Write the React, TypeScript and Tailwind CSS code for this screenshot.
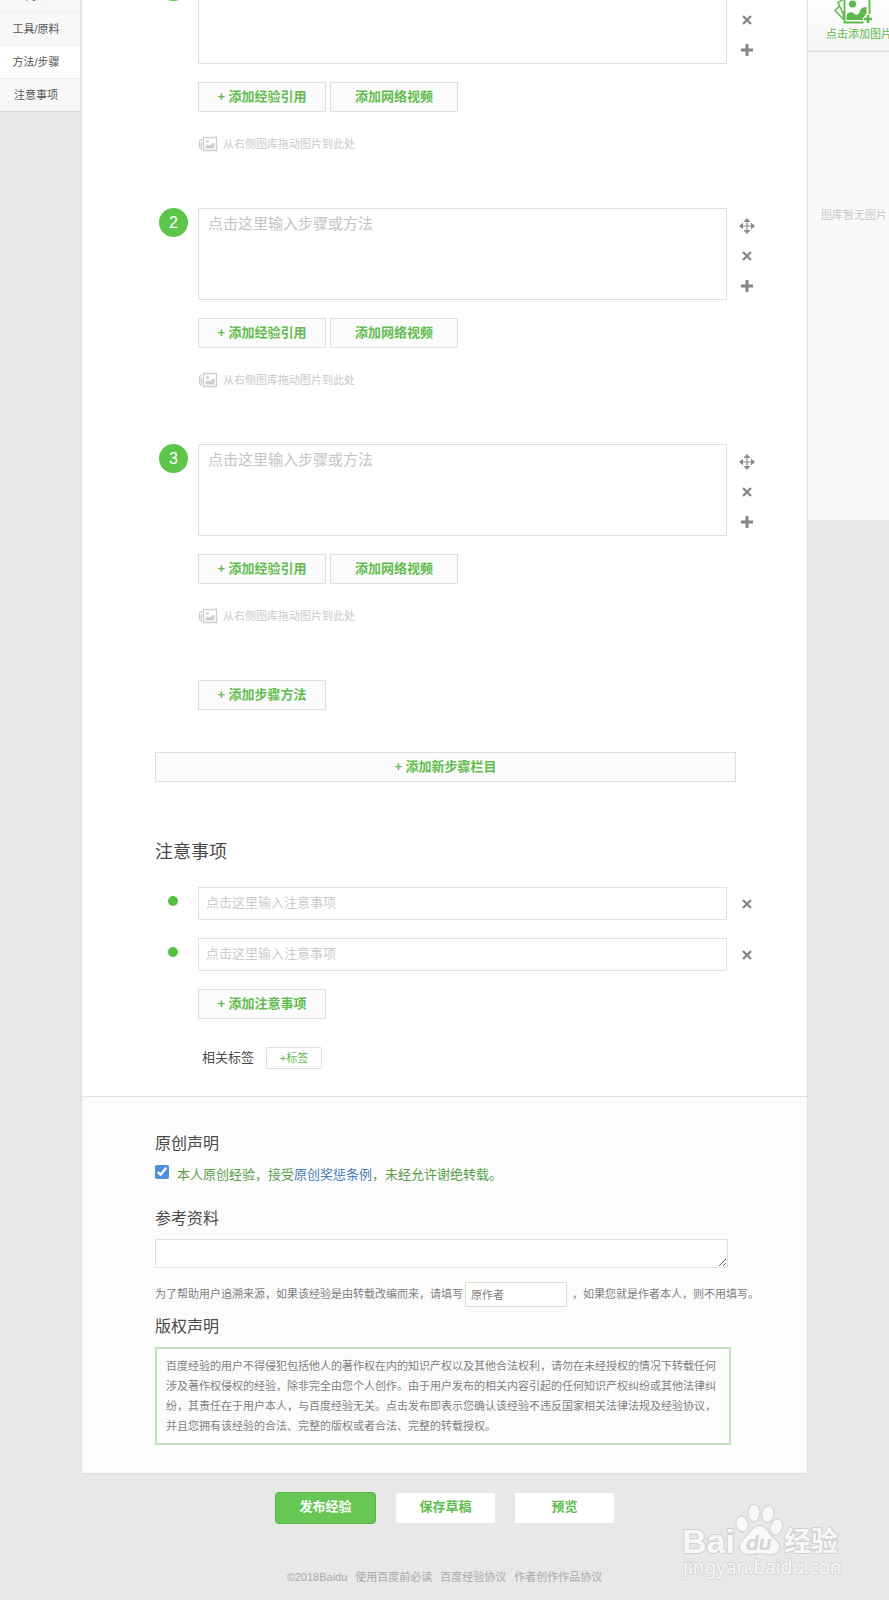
import type { ReactNode } from 'react'

const navItems = ['简介', '工具/原料', '方法/步骤', '注意事项']
const steps = [1, 2, 3]
const notes = [1, 2]

const outlineButton =
  'h-[30px] border border-[#dedede] bg-[#fbfbfb] text-[13px] font-bold text-[#62bd4e]'

const MoveIcon = () => (
  <svg viewBox="0 0 18 18" className="size-[18px]" fill="#8a8a8a">
    <path d="M9 1l3.600 4H5.400zM9 17l3.600-4H5.400zM1 9l4-3.600v7.200zM17 9l-4-3.600v7.200z" />
    <path d="M8.400 4h1.200v4.400H14v1.200H9.600V14H8.400V9.600H4V8.400h4.400z" />
  </svg>
)

const CloseIcon = () => (
  <svg viewBox="0 0 18 18" className="size-[18px]" stroke="#858585" strokeWidth="2.300">
    <path d="M5 5l8 8M13 5l-8 8" />
  </svg>
)

const PlusIcon = () => (
  <svg viewBox="0 0 18 18" className="size-[18px]" stroke="#858585" strokeWidth="3">
    <path d="M9 3v12M3 9h12" />
  </svg>
)

const GalleryIcon = () => (
  <svg viewBox="0 0 20 16" className="h-4 w-5 shrink-0" fill="none" stroke="#cfcfcf">
    <path d="M5.500 1.500h13v13h-13zM3.500 3L1.500 5v6l2 2.500M3.500 5.500v6" strokeWidth="1.300" />
    <circle cx="9.500" cy="5.500" r="1.500" fill="#cfcfcf" stroke="none" />
    <path d="M7.500 12.500V10l2-1.500 3 1 1.500-2.500h2.500v5.500z" fill="#cfcfcf" stroke="none" />
  </svg>
)

const AddPictureIcon = () => (
  <svg viewBox="0 0 40 32" className="h-8 w-10" fill="none" stroke="#5cb94c" strokeWidth="1.800">
    <path d="M35.500 22V2H10.500v28.500h19" />
    <path d="M10 7L4 10.500l6 13M5.500 14L1 18.500l8.500 9M9.500 27.500V20" strokeWidth="1.500" />
    <circle cx="18.500" cy="12" r="3.600" fill="#5cb94c" stroke="none" />
    <path
      d="M12.500 28v-5c2-3.500 5-3.500 7.500-1.500 3 2.500 5 1 6-2.500 1-2.500 3-4 6.500-4v6.500l-3.500 4.500V28z"
      fill="#5cb94c"
      stroke="none"
    />
    <path d="M34 23v8M30 27h8" strokeWidth="2.400" />
  </svg>
)

const Watermark = () => (
  <svg
    viewBox="0 0 162 82"
    className="absolute right-[47px] bottom-[18px] h-[82px] w-[162px]"
    fill="#f8f8f8"
    stroke="#cfcfcf"
    strokeWidth="2"
    strokeLinejoin="round"
    style={{ paintOrder: 'stroke' }}
  >
    <text x="2" y="53" fontSize="34" fontWeight="700" fontFamily="Liberation Sans, sans-serif">
      Bai
    </text>
    <ellipse cx="62" cy="24" rx="5.500" ry="7.500" transform="rotate(-12 62 24)" />
    <ellipse cx="74" cy="13" rx="5.500" ry="8" />
    <ellipse cx="88" cy="14" rx="5.500" ry="8" transform="rotate(10 88 14)" />
    <ellipse cx="96.500" cy="27" rx="5.500" ry="7.500" transform="rotate(16 96.500 27)" />
    <path d="M79 26c6 0 8 5 12 10 4 4 9 7 8 12-1 6-7 6-11 6-4-1-12-1-17 0-5 0-10-1-11-6-1-6 5-9 8-13 4-5 6-9 11-9z" />
    <text
      x="66"
      y="50"
      fontSize="21"
      fontWeight="700"
      fontStyle="italic"
      fontFamily="Liberation Sans, sans-serif"
      fill="#d4d4d4"
      stroke="none"
    >
      du
    </text>
    <text x="104" y="51" fontSize="27" fontWeight="700" fontFamily="Noto Sans CJK SC, sans-serif">
      经验
    </text>
    <text x="3" y="74" fontSize="19" fontFamily="Noto Sans, sans-serif" strokeWidth="1.500">
      jingyan.baidu.com
    </text>
  </svg>
)

interface IconButtonProps {
  label: string
  children: ReactNode
}

const IconButton = ({ label, children }: IconButtonProps) => (
  <button type="button" aria-label={label} className="size-[18px] shrink-0">
    {children}
  </button>
)

const Step = ({ index }: { index: number }) => (
  <li className="flex items-start pb-[54px]">
    <span className="mr-[10px] ml-1 flex size-[29px] shrink-0 items-center justify-center rounded-full bg-[#5cc54a] text-base text-white">
      {index}
    </span>
    <div className="min-w-0 flex-1">
      <textarea
        aria-label={`步骤 ${index}`}
        placeholder={index === 1 ? '' : '点击这里输入步骤或方法'}
        className="block h-[92px] w-full resize-none border border-[#dedede] bg-white px-[9px] py-[3px] text-[15px] leading-6 placeholder:text-[#c4c4c4]"
      />
      <div className="mt-[18px] flex gap-1">
        <button type="button" className={`${outlineButton} w-32`}>
          + 添加经验引用
        </button>
        <button type="button" className={`${outlineButton} w-32`}>
          添加网络视频
        </button>
      </div>
      <p className="mt-[22px] flex h-5 items-center gap-[5px] text-[11px] text-[#c9c9c9]">
        <GalleryIcon />
        从右侧图库拖动图片到此处
      </p>
    </div>
    <div className="mt-[9px] -mr-[29px] ml-[11px] flex flex-col gap-3">
      <IconButton label="移动步骤">
        <MoveIcon />
      </IconButton>
      <IconButton label="删除步骤">
        <CloseIcon />
      </IconButton>
      <IconButton label="插入步骤">
        <PlusIcon />
      </IconButton>
    </div>
  </li>
)

const Note = ({ index }: { index: number }) => (
  <li className="flex h-[33px] items-center">
    <span className="mr-5 mb-[5px] ml-[13px] size-[10px] shrink-0 rounded-full bg-[#57be43]" />
    <input
      type="text"
      aria-label={`注意事项 ${index}`}
      placeholder="点击这里输入注意事项"
      className="h-full min-w-0 flex-1 border border-[#e2e2e2] bg-white px-[7px] pb-[2px] text-[13px] placeholder:text-[#cccccc]"
    />
    <div className="-mr-[29px] ml-[11px] flex">
      <IconButton label="删除注意事项">
        <CloseIcon />
      </IconButton>
    </div>
  </li>
)

const SideNav = () => (
  <nav className="-mt-[21px] w-20 shrink-0">
    <ul className="border-b border-[#d6d6d6] text-center text-[11px] text-[#555555]">
      {navItems.map((item) => (
        <li
          key={item}
          className={`border-t border-[#ececec] ${item === '方法/步骤' ? 'bg-white' : 'bg-[#f7f7f7]'}`}
        >
          <a href="#" className="block pr-2 leading-8">
            {item}
          </a>
        </li>
      ))}
    </ul>
  </nav>
)

const Gallery = () => (
  <aside className="h-[520px] w-[82px] shrink-0 overflow-hidden border-l border-[#e2e2e2] bg-[#f9f9f9] whitespace-nowrap">
    <button
      type="button"
      className="-mt-2 flex h-[60px] w-[120px] flex-col items-start border-b border-[#d9d9d9] bg-linear-to-b from-white to-[#f5f5f5] pl-[18px] text-[11px] text-[#5cb94c]"
    >
      <span className="pl-2">
        <AddPictureIcon />
      </span>
      <span className="leading-5">点击添加图片</span>
    </button>
    <p className="mt-[153px] pl-[13px] text-[11px] leading-5 text-[#c9c9c9]">图库暂无图片</p>
  </aside>
)

export default function App() {
  return (
    <div className="relative min-h-screen overflow-hidden bg-[#e8e8e8] font-['Liberation_Sans','Noto_Sans_CJK_SC',sans-serif] text-[#4a4a4a]">
      <div className="flex items-start">
        <SideNav />
        <div className="ml-[2px] min-w-0 flex-1">
          <main className="-mt-7 bg-white shadow-[0_0_2px_rgba(0,0,0,0.1)]">
            <section className="pr-[71px] pb-[27px] pl-[73px]">
              <ol className="pr-[9px]">
                {steps.map((step) => (
                  <Step key={step} index={step} />
                ))}
              </ol>
              <div className="pl-[43px]">
                <button type="button" className={`${outlineButton} w-32`}>
                  + 添加步骤方法
                </button>
              </div>
              <button type="button" className={`${outlineButton} mt-[42px] block w-full`}>
                + 添加新步骤栏目
              </button>

              <h2 className="mt-[58px] text-lg leading-6">注意事项</h2>
              <ul className="mt-[23px] flex flex-col gap-[18px] pr-[9px]">
                {notes.map((note) => (
                  <Note key={note} index={note} />
                ))}
              </ul>
              <div className="mt-[18px] pl-[43px]">
                <button type="button" className={`${outlineButton} block w-32`}>
                  + 添加注意事项
                </button>
                <div className="mt-7 flex h-[22px] items-center gap-3 pl-1 text-[13px]">
                  相关标签
                  <button
                    type="button"
                    className="h-[22px] w-14 rounded-xs border border-[#dedede] bg-white text-[11px] text-[#62bd4e]"
                  >
                    +标签
                  </button>
                </div>
              </div>
            </section>

            <section className="border-t border-[#e4e4e4] bg-[#fcfcfc] pt-[35px] pr-[71px] pb-7 pl-[73px]">
              <h3 className="text-base leading-6">原创声明</h3>
              <div className="mt-[9px] flex gap-2 text-[13px] leading-5 text-[#5a9e4b]">
                <input
                  id="original"
                  type="checkbox"
                  defaultChecked
                  className="size-[14px] shrink-0 accent-[#4a90e2]"
                />
                <label htmlFor="original">
                  本人原创经验，接受
                  <a href="#" className="text-[#4a7ab5]">
                    原创奖惩条例
                  </a>
                  ，未经允许谢绝转载。
                </label>
              </div>

              <h3 className="mt-[22px] text-base leading-6">
                <label htmlFor="reference">参考资料</label>
              </h3>
              <div className="mt-2 pr-2">
                <textarea
                  id="reference"
                  className="block h-[29px] w-full resize-y border border-[#e2e2e2] bg-white"
                />
              </div>
              <div className="mt-[14px] -mr-10 flex h-[25px] items-center text-[11px] whitespace-nowrap text-[#808080]">
                <label htmlFor="author">
                  为了帮助用户追溯来源，如果该经验是由转载改编而来，请填写
                </label>
                <input
                  id="author"
                  type="text"
                  placeholder="原作者"
                  className="mr-[5px] ml-[2px] h-[25px] w-[102px] border border-[#cfe3cb] bg-white px-[5px] placeholder:text-[#808080]"
                />
                <span>，如果您就是作者本人，则不用填写。</span>
              </div>

              <h3 className="mt-2 text-base leading-6">版权声明</h3>
              <p className="mt-2 mr-[5px] border-2 border-[#c3e0be] px-[9px] py-[7px] text-[11px] leading-5 text-[#808080]">
                百度经验的用户不得侵犯包括他人的著作权在内的知识产权以及其他合法权利，请勿在未经授权的情况下转载任何涉及著作权侵权的经验，除非完全由您个人创作。由于用户发布的相关内容引起的任何知识产权纠纷或其他法律纠纷，其责任在于用户本人，与百度经验无关。点击发布即表示您确认该经验不违反国家相关法律法规及经验协议，并且您拥有该经验的合法、完整的版权或者合法、完整的转载授权。
              </p>
            </section>
          </main>

          <div className="mt-[19px] flex h-8 items-center justify-center gap-5 text-[13px] font-bold text-[#62bd4e]">
            <button
              type="button"
              className="h-8 w-[101px] rounded-sm border border-[#55b545] bg-[#67c755] pb-[2px] text-white"
            >
              发布经验
            </button>
            <button type="button" className="h-[30px] w-[99px] rounded-xs bg-white pb-[2px]">
              保存草稿
            </button>
            <button type="button" className="h-[30px] w-[99px] rounded-xs bg-white pb-[2px]">
              预览
            </button>
          </div>
          <footer className="mt-[43px] flex justify-center gap-2 pb-[13px] text-[11px] leading-5 text-[#a8a8a8]">
            <span>©2018Baidu</span>
            <a href="#">使用百度前必读</a>
            <a href="#">百度经验协议</a>
            <a href="#">作者创作作品协议</a>
          </footer>
        </div>
        <Gallery />
      </div>
      <Watermark />
    </div>
  )
}
